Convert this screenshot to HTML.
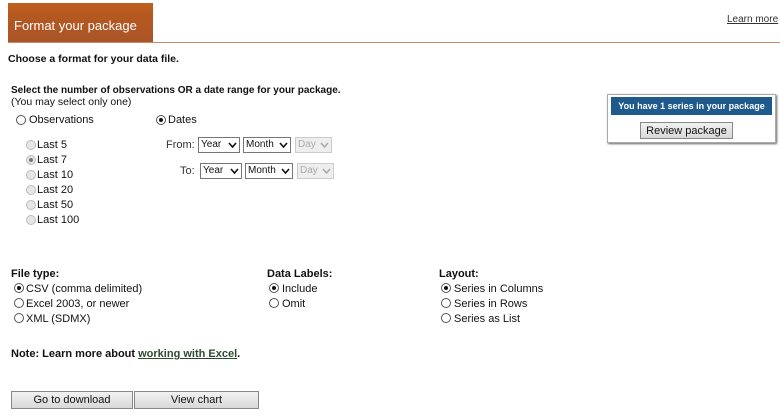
<!DOCTYPE html>
<html><head><meta charset="utf-8"><style>
*{margin:0;padding:0;box-sizing:border-box}
body{width:780px;height:418px;background:#fff;font-family:"Liberation Sans",Arial,sans-serif;font-size:11px;color:#111;position:relative;overflow:hidden}
.a{position:absolute;white-space:nowrap}
.tab{left:8px;top:3px;width:145px;height:40px;background:linear-gradient(#c0601e,#b5581f 30%,#a9552a);color:#fff;font-size:13px;padding:15px 0 0 6px}
.line{left:8px;top:42px;width:772px;height:1px;background:#c98a66}
b{font-weight:bold}
.r{position:absolute;width:10px;height:10px;border:1px solid #555;border-radius:50%;background:#fff}
.r.on::after{content:"";position:absolute;left:2px;top:2px;width:4px;height:4px;border-radius:50%;background:#111}
.r.dis{border-color:#bbb;background:#e6e6e6}
.r.dis.on::after{background:#777}
.sel{position:absolute;height:16px;border:1px solid #777;font-size:10px;padding:1px 0 0 2px;background:#fff}
.sel.dis{border-color:#ccc;background:#eee;color:#aaa}
.sel svg{position:absolute;right:2px;top:4px}
.btn{position:absolute;background:linear-gradient(#f2f2f2,#d8d8d8);border:1px solid #888;text-align:center;font-size:11px;padding-top:2px}
</style></head><body>
<div class="a tab">Format your package</div>
<div class="a line"></div>
<div class="a" style="left:727px;top:14px;text-decoration:underline;color:#333;font-size:10px">Learn more</div>
<div class="a" style="left:8px;top:53px;font-size:10.5px"><b>Choose a format for your data file.</b></div>
<div class="a" style="left:11px;top:85px;font-size:10px"><b>Select the number of observations OR a date range for your package.</b></div>
<div class="a" style="left:11px;top:96px;font-size:10.5px">(You may select only one)</div>

<div class="r" style="left:16px;top:115px"></div><div class="a" style="left:29px;top:114px">Observations</div>
<div class="r on" style="left:156px;top:115px"></div><div class="a" style="left:168px;top:114px">Dates</div>

<div class="r dis" style="left:26px;top:140px"></div><div class="a" style="left:37px;top:139px">Last 5</div>
<div class="r dis on" style="left:26px;top:155px"></div><div class="a" style="left:37px;top:154px">Last 7</div>
<div class="r dis" style="left:26px;top:170px"></div><div class="a" style="left:37px;top:169px">Last 10</div>
<div class="r dis" style="left:26px;top:185px"></div><div class="a" style="left:37px;top:184px">Last 20</div>
<div class="r dis" style="left:26px;top:200px"></div><div class="a" style="left:37px;top:199px">Last 50</div>
<div class="r dis" style="left:26px;top:215px"></div><div class="a" style="left:37px;top:214px">Last 100</div>

<div class="a" style="left:166px;top:139px;color:#333">From:</div>
<div class="sel" style="left:198px;top:137px;width:42px">Year<svg width="9" height="6"><path d="M1 1L4.5 5L8 1" stroke="#111" stroke-width="1.6" fill="none"/></svg></div>
<div class="sel" style="left:243px;top:137px;width:48px">Month<svg width="9" height="6"><path d="M1 1L4.5 5L8 1" stroke="#111" stroke-width="1.6" fill="none"/></svg></div>
<div class="sel dis" style="left:295px;top:137px;width:37px">Day<svg width="9" height="6"><path d="M1 1L4.5 5L8 1" stroke="#aaa" stroke-width="1.6" fill="none"/></svg></div>
<div class="a" style="left:180px;top:165px;color:#333">To:</div>
<div class="sel" style="left:200px;top:163px;width:42px">Year<svg width="9" height="6"><path d="M1 1L4.5 5L8 1" stroke="#111" stroke-width="1.6" fill="none"/></svg></div>
<div class="sel" style="left:245px;top:163px;width:48px">Month<svg width="9" height="6"><path d="M1 1L4.5 5L8 1" stroke="#111" stroke-width="1.6" fill="none"/></svg></div>
<div class="sel dis" style="left:297px;top:163px;width:37px">Day<svg width="9" height="6"><path d="M1 1L4.5 5L8 1" stroke="#aaa" stroke-width="1.6" fill="none"/></svg></div>

<div class="a" style="left:607px;top:94px;width:169px;height:49px;border:1px solid #aaa;box-shadow:1px 1px 2px #666;background:#fff"></div>
<div class="a" style="left:611px;top:97px;width:161px;height:18px;background:#1f5a8c;color:#fff;font-size:9px;font-weight:bold;text-align:center;padding-top:4px">You have 1 series in your package</div>
<div class="btn" style="left:640px;top:122px;width:93px;height:17px">Review package</div>

<div class="a" style="left:11px;top:268px"><b>File type:</b></div>
<div class="r on" style="left:14px;top:283px"></div><div class="a" style="left:26px;top:283px">CSV (comma delimited)</div>
<div class="r" style="left:14px;top:298px"></div><div class="a" style="left:26px;top:298px">Excel 2003, or newer</div>
<div class="r" style="left:14px;top:313px"></div><div class="a" style="left:26px;top:313px">XML (SDMX)</div>

<div class="a" style="left:267px;top:268px"><b>Data Labels:</b></div>
<div class="r on" style="left:269px;top:283px"></div><div class="a" style="left:282px;top:283px">Include</div>
<div class="r" style="left:269px;top:298px"></div><div class="a" style="left:282px;top:298px">Omit</div>

<div class="a" style="left:439px;top:268px"><b>Layout:</b></div>
<div class="r on" style="left:441px;top:283px"></div><div class="a" style="left:454px;top:283px">Series in Columns</div>
<div class="r" style="left:441px;top:298px"></div><div class="a" style="left:454px;top:298px">Series in Rows</div>
<div class="r" style="left:441px;top:313px"></div><div class="a" style="left:454px;top:313px">Series as List</div>

<div class="a" style="left:11px;top:348px"><b>Note: Learn more about <span style="color:#2e4a2e;text-decoration:underline">working with Excel</span>.</b></div>

<div class="btn" style="left:11px;top:391px;width:122px;height:18px">Go to download</div>
<div class="btn" style="left:134px;top:391px;width:125px;height:18px">View chart</div>
</body></html>
